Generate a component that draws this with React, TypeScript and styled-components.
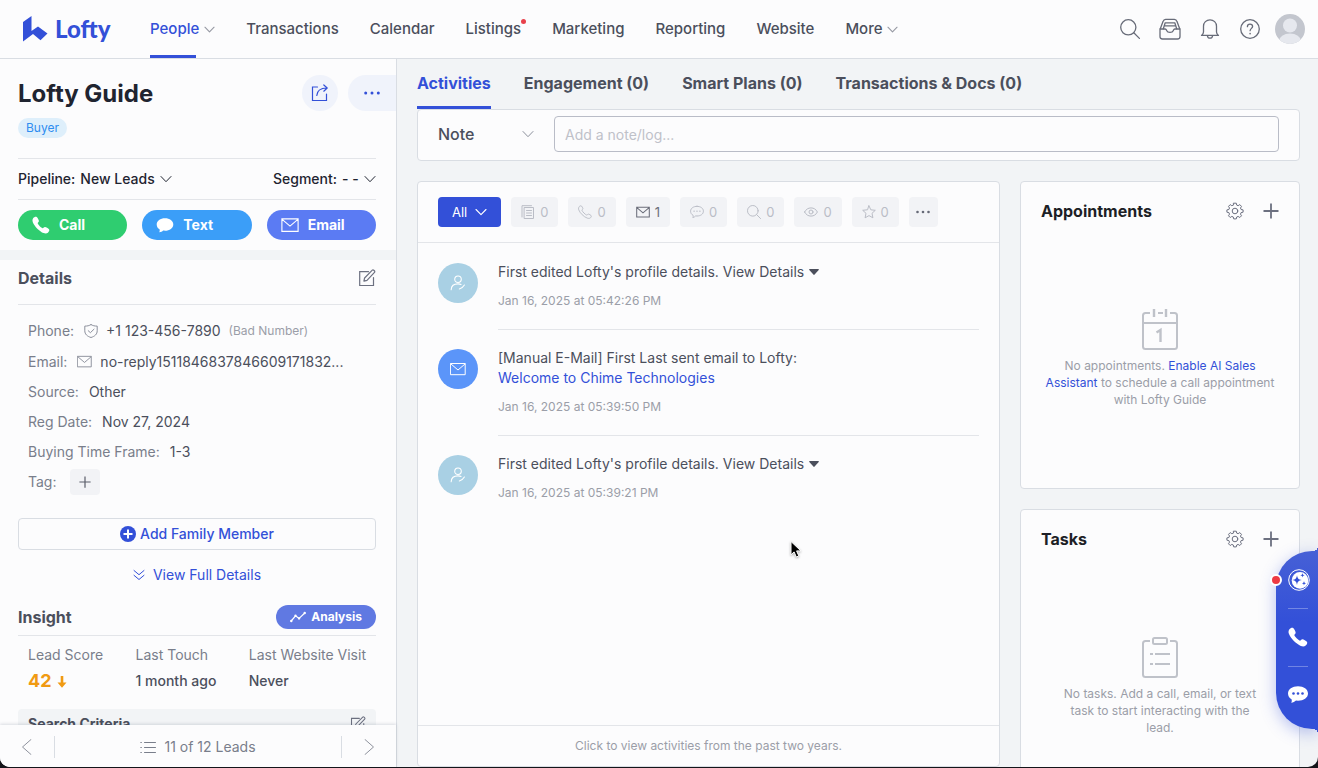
import React from "react";
import styled, { createGlobalStyle, css } from "styled-components";

const color = {
  brand: "#3350d8",
  ink: "#1f2430",
  text: "#4b4f5c",
  muted: "#797e8b",
  faint: "#9b9ea8",
  line: "#e3e5e9",
  frame: "#d9dde3",
  canvas: "#f2f4f6",
  surface: "#fcfcfd",
  chip: "#f2f3f6",
};

const GlobalStyle = createGlobalStyle`
  *, *::before, *::after { box-sizing: border-box; }
  body {
    margin: 0;
    background: #14151a;
    font-family: Inter, "Liberation Sans", sans-serif;
    font-size: 14px;
    line-height: 20px;
    color: ${color.text};
  }
  button, input, select {
    font: inherit;
    color: inherit;
    border: 0;
    margin: 0;
    padding: 0;
    background: none;
  }
  button { cursor: pointer; }
  a { color: inherit; text-decoration: none; }
  h1, h2, p, ul, ol, dl, dd { margin: 0; padding: 0; list-style: none; }
  svg { display: block; flex: none; }
`;

/* ---------- icons ---------- */

type IconProps = { size?: number; children: React.ReactNode; box?: number; weight?: number };

const Icon = ({ size = 16, box = 16, weight = 1, children }: IconProps) => (
  <svg
    width={size}
    height={size}
    viewBox={`0 0 ${box} ${box}`}
    fill="none"
    stroke="currentColor"
    strokeWidth={weight}
    strokeLinecap="round"
    strokeLinejoin="round"
    aria-hidden="true"
  >
    {children}
  </svg>
);

const ChevronDown = ({ size = 12, weight = 1.2 }: { size?: number; weight?: number }) => (
  <Icon size={size} box={12} weight={weight}>
    <path d="M1 3.5 6 8.7 11 3.5" />
  </Icon>
);

const MailIcon = ({ size = 16, weight = 1 }: { size?: number; weight?: number }) => (
  <Icon size={size} weight={weight}>
    <path d="M.8 2.5h14.4v11.2H.8zM1 3l7 6 7-6" strokeLinejoin="miter" />
  </Icon>
);

const SearchIcon = ({ size = 20, weight = 1.3 }: { size?: number; weight?: number }) => (
  <Icon size={size} box={20} weight={weight}>
    <circle cx="8.3" cy="8.3" r="7.6" />
    <path d="m13.8 13.8 5.6 5.6" />
  </Icon>
);

const InboxIcon = () => (
  <Icon size={22} box={22} weight={1.3}>
    <path d="M1 11h5.200c.9 0 1 .5 1.400 1.400.5 1.200 1.600 1.900 3.400 1.900s2.900-.7 3.400-1.900c.4-.9.5-1.400 1.400-1.400H21v7.500c0 1.500-.8 2.500-2.500 2.500h-15C1.800 21 1 20 1 18.500z" />
    <path d="M1.300 10.700 4 3.600C4.500 2 5.200 1.400 6.600 1.400h8.800c1.400 0 2.100.6 2.600 2.200l2.700 7.100" />
    <path d="M4.300 10.800 6.200 4.800h9.600l1.900 6M5.500 7.800h11" />
  </Icon>
);

const BellIcon = () => (
  <Icon size={20} box={20} weight={1.3}>
    <path d="M1.500 16.400c1.300-1 2-1.900 2-3.400V7.200C3.500 3.500 6.300.8 10 .8s6.500 2.700 6.500 6.400V13c0 1.500.7 2.400 2 3.400z" />
    <path d="M7.400 16.800c.3 1.500 1.300 2.400 2.600 2.400s2.300-.9 2.600-2.400" />
  </Icon>
);

const HelpIcon = () => (
  <Icon size={20} box={20} weight={1.3}>
    <circle cx="10" cy="10" r="9.300" />
    <path d="M7.400 7.700C7.400 6.100 8.500 5.200 10 5.200s2.600.9 2.600 2.300c0 1.800-2.500 2-2.500 4.200" />
    <path d="M10.100 14.500v.3" strokeWidth="1.600" />
  </Icon>
);

const AvatarIcon = () => (
  <svg width="30" height="30" viewBox="0 0 30 30" aria-hidden="true">
    <defs>
      <clipPath id="avatar-round">
        <circle cx="15" cy="15" r="15" />
      </clipPath>
    </defs>
    <g clipPath="url(#avatar-round)">
      <rect width="30" height="30" fill="#c3c6ce" />
      <circle cx="15" cy="11.500" r="7" fill="#e6e8ee" />
      <ellipse cx="15" cy="27" rx="11" ry="7.500" fill="#e6e8ee" />
    </g>
  </svg>
);

const ShareIcon = () => (
  <Icon size={18} box={18} weight={1.2}>
    <path d="M6.500 3H1.500v13.500h14V10" strokeLinejoin="miter" />
    <path d="M5.800 11.500c.2-4.500 3.200-7.300 10-7.500M12.800 1l3.400 3-3.400 3.200" />
  </Icon>
);

const EditIcon = ({ size = 18 }: { size?: number }) => (
  <Icon size={size} box={18} weight={1.2}>
    <path d="M10.500 2.700H1.700v13.800h13.800V8.500" strokeLinejoin="miter" />
    <path d="m5.900 12.200.7-3.200 7.700-7.800c.9-.9 3.200 1.100 2.200 2.200L9 11.300z" />
  </Icon>
);

const Handset = ({ size = 18, solid = true, weight = 1 }: { size?: number; solid?: boolean; weight?: number }) => (
  <svg
    width={size}
    height={size}
    viewBox="0 0 18 18"
    fill={solid ? "currentColor" : "none"}
    stroke={solid ? "none" : "currentColor"}
    strokeWidth={weight}
    strokeLinejoin="round"
    aria-hidden="true"
  >
    <path
      d={
        solid
          ? "M1.300 2.100C2.100 1 3.800.200 4.700 1c1 .8 2.100 3 2.200 4.100.1 1-1.300 1.500-1.200 2.200.2 1.300 3.700 4.800 5 5 .7.100 1.300-1.300 2.300-1.200 1.100.100 3.200 1.300 4 2.200.8.900 0 2.500-1.100 3.400-1 .9-2.600 1.100-4.300.4C7.500 15.400 2.500 10.400.9 6.400.200 4.700.400 3.200 1.300 2.100z"
          : "M1.600 2.100C2.300 1.300 3.600.700 4.300 1.200c.8.600 1.900 2.500 2 3.400.1.800-1.200 1.500-1.200 2.200 0 1.300 4.800 6.100 6.100 6.100.7 0 1.400-1.200 2.200-1.200 1 .1 2.900 1.300 3.500 2 .5.700 0 1.900-.8 2.700-.9.900-2.500 1.100-4.300.4C7.500 15.300 2.500 10.300 1 6.300.3 4.600.8 3 1.600 2.100z"
      }
    />
  </svg>
);

const BubbleIcon = () => (
  <svg width="18" height="18" viewBox="0 0 18 18" fill="currentColor" aria-hidden="true">
    <path d="M9 2.200c4.700 0 8.300 2.700 8.300 6.200S13.700 14.700 9 14.700c-.6 0-1.200 0-1.800-.1-1 1-2.300 1.600-4 1.700.5-.9.700-1.800.5-2.800C1.900 12.300.7 10.500.7 8.400.7 4.900 4.300 2.200 9 2.200z" />
  </svg>
);

const ShieldIcon = () => (
  <Icon size={14} box={14} weight={1}>
    <path d="M7 .6c1.800 1.200 3.800 1.500 6.200 1.500v4.700c0 3.400-2.400 5.500-6.200 6.700C3.200 12.300.8 10.200.8 6.800V2.100C3.200 2.100 5.200 1.800 7 .6z" />
    <path d="m4.200 6.700 2.200 2 3.600-3.500" />
  </Icon>
);

const PlusIcon = ({ size = 16, weight = 2 }: { size?: number; weight?: number }) => (
  <Icon size={size} weight={weight}>
    <path d="M8 .5v15M.5 8h15" strokeLinecap="butt" />
  </Icon>
);

const PlusDisc = () => (
  <svg width="16" height="16" viewBox="0 0 16 16" aria-hidden="true">
    <circle cx="8" cy="8" r="8" fill="currentColor" />
    <path d="M8 3.500v9M3.500 8h9" stroke="#fff" strokeWidth="2" />
  </svg>
);

const DoubleChevron = () => (
  <Icon size={12} box={12} weight={1}>
    <path d="m1 1.500 5 4.200 5-4.200M1 6.300l5 4.200 5-4.200" />
  </Icon>
);

const TrendIcon = () => (
  <Icon size={16} weight={1.2}>
    <path d="m1.200 12 4.300-5.200 3.600 2.600L14.800 4" />
    <circle cx="1.300" cy="12" r=".6" />
    <circle cx="5.500" cy="6.800" r=".6" />
    <circle cx="9.100" cy="9.400" r=".6" />
    <circle cx="14.700" cy="4" r=".6" />
  </Icon>
);

const DownArrow = () => (
  <svg width="10" height="14" viewBox="0 0 10 14" fill="#f09a13" aria-hidden="true">
    <path d="M3.700 2h2.600v6.500H9.500L5 13.800.5 8.500h3.200z" />
  </svg>
);

const ListIcon = () => (
  <Icon size={16} weight={1}>
    <path d="M4.500 3.500h11M4.500 8.500h11M4.500 13.500h11M.8 3.500h.6M.8 8.500h.6M.8 13.500h.6" />
  </Icon>
);

const ArrowSide = ({ to }: { to: "left" | "right" }) => (
  <Icon size={16} weight={1}>
    <path d={to === "left" ? "M12 .5 3.500 8l8.500 7.500" : "M4 .5 12.500 8 4 15.500"} />
  </Icon>
);

const GearIcon = () => (
  <Icon size={18} box={18} weight={1}>
    <circle cx="9" cy="9" r="2.800" />
    <path d="M7.700 1.200h2.600l.4 1.900 1.400.6 1.700-1.100 1.700 1.800-1 1.600.6 1.500 2 .4v2.300l-2 .4-.6 1.500 1 1.700-1.700 1.700-1.700-1.100-1.400.6-.4 1.900H7.700l-.4-1.900-1.500-.6-1.600 1.100-1.700-1.700 1-1.700-.6-1.500-2-.4V7.900l2-.4.6-1.500-1-1.600 1.700-1.800 1.600 1.100 1.500-.6z" />
  </Icon>
);

const NotesIcon = () => (
  <Icon size={14} box={14}>
    <path d="M3.500 2.500h9v11h-9zM1 12V.7h9.500M5.500 5.500h5M5.500 8h5M5.500 10.500h5" strokeLinejoin="miter" />
  </Icon>
);

const ChatIcon = () => (
  <Icon size={14} box={14}>
    <path d="M7 1.300c3.600 0 6.400 2 6.400 4.900S10.600 11 7 11l-1.300-.1c-.8.900-1.700 1.400-2.900 1.600.4-.7.500-1.500.3-2.200C1.500 9.500.6 8 .6 6.200.6 3.300 3.400 1.300 7 1.300z" />
    <path d="M4 6.200h.2M6.900 6.200h.2M9.800 6.200h.2" strokeWidth="1.300" />
  </Icon>
);

const EyeIcon = () => (
  <Icon size={14} box={14}>
    <path d="M.6 7C2 4.300 4.200 2.900 7 2.900S12 4.300 13.400 7C12 9.700 9.800 11.100 7 11.100S2 9.700.6 7z" />
    <circle cx="7" cy="7" r="2" />
  </Icon>
);

const StarIcon = () => (
  <Icon size={14} box={14}>
    <path d="m7 .8 1.800 4 4.500.5-3.300 3 .9 4.500L7 10.600l-3.900 2.200.9-4.500-3.300-3 4.500-.5z" />
  </Icon>
);

const Dots = ({ size = 16 }: { size?: number }) => (
  <svg width={size} height="4" viewBox="0 0 16 4" fill="currentColor" aria-hidden="true">
    <circle cx="1.700" cy="2" r="1.500" />
    <circle cx="8" cy="2" r="1.500" />
    <circle cx="14.300" cy="2" r="1.500" />
  </svg>
);

const PersonEditIcon = () => (
  <Icon size={16} box={18} weight={1.2}>
    <circle cx="9" cy="4.800" r="3.700" />
    <path d="M1.300 16.500c.2-4 2.700-6.500 7.700-6.500 1.400 0 2.500.2 3.500.6M10.500 15.800c2.500-.8 4.300-2.300 5.700-4.600" />
  </Icon>
);

const CaretDown = () => (
  <svg width="10" height="6" viewBox="0 0 10 6" fill="currentColor" aria-hidden="true">
    <path d="M.8 0h8.400c.7 0 .9.600.5 1L5.600 5.600c-.3.400-.9.400-1.200 0L.3 1C-.1.600.1 0 .8 0z" />
  </svg>
);

const CalendarArt = () => (
  <svg width="36" height="42" viewBox="0 0 36 42" fill="none" stroke="#bfc2c9" strokeWidth="2" aria-hidden="true">
    <path d="M8 4H3.500C2 4 1 5 1 6.500v31C1 39 2 40 3.500 40h29c1.500 0 2.500-1 2.500-2.500v-31C35 5 34 4 32.500 4H28M1 14h34M16 4h5" />
    <path d="M12 0v8M24 0v8" strokeWidth="2.400" />
    <path d="M14.500 23.500 18.500 21v12" strokeWidth="2.400" />
  </svg>
);

const ClipboardArt = () => (
  <svg width="36" height="42" viewBox="0 0 36 42" fill="none" stroke="#bfc2c9" strokeWidth="2" aria-hidden="true">
    <path d="M8 4H3.500C2 4 1 5 1 6.500v31C1 39 2 40 3.500 40h29c1.500 0 2.500-1 2.500-2.500v-31C35 5 34 4 32.500 4H28" />
    <rect x="11" y="1" width="14" height="6" rx="1.500" />
    <path d="M8 17h3M13 17h15M8 27h3M13 27h15" />
  </svg>
);

const AssistantIcon = () => (
  <svg width="22" height="22" viewBox="0 0 22 22" aria-hidden="true">
    <circle cx="11" cy="11" r="10.300" fill="none" stroke="#fff" strokeWidth="1" />
    <circle cx="12" cy="11.400" r="8.300" fill="#fff" />
    <path
      d="M9 6.300c.6 3.300 1.500 4.200 4.800 4.800-3.300.6-4.200 1.500-4.800 4.800-.6-3.300-1.500-4.200-4.800-4.800 3.300-.6 4.200-1.500 4.800-4.800zM14.500 4c.3 1.600.7 2 2.300 2.300-1.600.3-2 .7-2.300 2.300-.3-1.600-.7-2-2.300-2.300 1.600-.3 2-.7 2.300-2.300zM16 12c.3 1.600.7 2 2.300 2.300-1.600.3-2 .7-2.300 2.300-.3-1.600-.7-2-2.300-2.300 1.600-.3 2-.7 2.300-2.300z"
      fill={color.brand}
    />
  </svg>
);

const ChatSolid = () => (
  <svg width="20" height="20" viewBox="1 2 20 20" fill="#fff" aria-hidden="true">
    <path d="M11 3.300c5.700 0 10 3 10 7.200s-4.300 7.200-10 7.200l-2-.1c-1.300 1.200-2.800 2-4.800 2.200.6-1.100.8-2.200.5-3.300C2.400 15.200 1 13 1 10.500c0-4.200 4.300-7.200 10-7.200z" />
    <g fill={color.brand}>
      <circle cx="6.500" cy="10.500" r="1.300" />
      <circle cx="11" cy="10.500" r="1.300" />
      <circle cx="15.500" cy="10.500" r="1.300" />
    </g>
  </svg>
);

const PointerIcon = () => (
  <svg width="16" height="20" viewBox="0 0 16 20" aria-hidden="true">
    <path
      d="M2 1.500v13.300l3.100-2.900 2.200 5.100 2.500-1.100-2.200-5h4.300z"
      fill="#000"
      stroke="#fff"
      strokeWidth="1"
      strokeLinejoin="round"
    />
  </svg>
);

/* ---------- shell ---------- */

const Shell = styled.div`
  position: relative;
  height: calc(100vh - 1px);
  display: flex;
  flex-direction: column;
  overflow: hidden;
  background: ${color.canvas};
  border-radius: 0 0 10px 10px;
`;

const TopBar = styled.header`
  flex: none;
  height: 59px;
  display: flex;
  align-items: center;
  padding: 0 13px 0 22px;
  background: ${color.surface};
  border-bottom: 1px solid ${color.frame};
`;

const Brand = styled.a`
  display: flex;
  align-items: center;
  gap: 7px;
  width: 128px;
  color: ${color.brand};
  font-family: Lato, Inter, sans-serif;
  font-size: 24px;
  font-weight: 900;
`;

const NavList = styled.nav`
  display: flex;
  align-self: stretch;
  gap: 31px;
`;

const NavLink = styled.a<{ $active?: boolean }>`
  position: relative;
  display: flex;
  align-items: center;
  gap: 5px;
  font-size: 15px;
  font-weight: 500;
  color: ${(p) => (p.$active ? color.brand : color.text)};

  svg { color: #9699a3; }

  ${(p) =>
    p.$active &&
    css`
      &::after {
        content: "";
        position: absolute;
        left: 0;
        right: 19px;
        bottom: 0;
        height: 3px;
        background: ${color.brand};
      }
    `}
`;

const NewDot = styled.span`
  position: absolute;
  top: 19px;
  right: -5px;
  width: 5px;
  height: 5px;
  border-radius: 50%;
  background: #e8414b;
`;

const Tools = styled.div`
  display: flex;
  align-items: center;
  margin-left: auto;
`;

const ToolButton = styled.button`
  width: 40px;
  height: 40px;
  display: grid;
  place-items: center;
  color: #686c79;

  &:last-child { margin: 0 -5px 0 0; }
`;

const Body = styled.div`
  flex: 1;
  min-height: 0;
  display: flex;
`;

/* ---------- lead panel ---------- */

const LeadPanel = styled.aside`
  flex: none;
  width: 397px;
  display: flex;
  flex-direction: column;
  background: ${color.surface};
  border-right: 1px solid ${color.frame};
`;

const LeadScroll = styled.div`
  flex: 1;
  min-height: 0;
  overflow: hidden;
`;

const LeadHead = styled.div`
  display: flex;
  align-items: center;
  height: 52px;
  padding: 16px 0 0 18px;
`;

const LeadName = styled.h1`
  flex: 1;
  padding-top: 2px;
  font-size: 24px;
  line-height: 36px;
  font-weight: 700;
  color: ${color.ink};
`;

const RoundButton = styled.button<{ $flush?: boolean }>`
  display: grid;
  place-items: center;
  width: ${(p) => (p.$flush ? 48 : 36)}px;
  height: 36px;
  margin-left: ${(p) => (p.$flush ? 10 : 0)}px;
  border-radius: ${(p) => (p.$flush ? "18px 0 0 18px" : "18px")};
  background: #f0f3fb;
  color: ${color.brand};
`;

const Section = styled.section`
  padding: 0 20px 0 18px;
`;

const Badge = styled.span`
  display: inline-block;
  margin-top: 7px;
  padding: 0 8px;
  border-radius: 10px;
  background: #deeffb;
  color: #2f8df0;
  font-size: 12px;
`;

const StageRow = styled.div`
  display: flex;
  justify-content: space-between;
  margin-top: 20px;
  height: 42px;
  align-items: center;
  border: solid ${color.line};
  border-width: 1px 0;
  color: ${color.ink};
  font-weight: 500;
`;

const PickLabel = styled.label`
  display: flex;
  gap: 5px;
`;

const PickBox = styled.span`
  position: relative;
  display: flex;
  align-items: center;

  select {
    appearance: none;
    padding-right: 17px;
    outline: none;
  }
  svg {
    position: absolute;
    right: 0;
    pointer-events: none;
  }
`;

const ContactRow = styled.div`
  display: grid;
  grid-template-columns: repeat(3, 1fr);
  gap: 15px;
  padding: 10px 0;
`;

const ContactButton = styled.button<{ $tone: string }>`
  display: flex;
  align-items: center;
  gap: 9px;
  height: 30px;
  padding-left: 14px;
  border-radius: 15px;
  background: ${(p) => p.$tone};
  color: #fff;
  font-weight: 700;
`;

const Band = styled.div`
  height: 10px;
  background: ${color.canvas};
`;

const SectionHead = styled.div<{ $height: number; $lift?: number }>`
  display: flex;
  align-items: center;
  justify-content: space-between;
  height: ${(p) => p.$height}px;
  padding-bottom: ${(p) => p.$lift ?? 0}px;
  border-bottom: 1px solid ${color.line};

  h2 {
    font-size: 16px;
    font-weight: 700;
    color: ${color.text};
  }
`;

const PlainButton = styled.button`
  display: grid;
  place-items: center;
  color: #6c7080;
`;

const Facts = styled.dl`
  padding: 10px 0 0 10px;
`;

const Fact = styled.div<{ $contact?: boolean }>`
  display: flex;
  align-items: center;
  gap: 10px;
  height: ${(p) => (p.$contact ? 31 : 30)}px;

  dt { color: ${color.muted}; }
  dd {
    display: flex;
    align-items: center;
    gap: 8px;
    color: ${color.text};
  }
  small {
    font-size: 12px;
    color: ${color.faint};
  }
  svg { color: #8b8f9b; }
`;

const TagButton = styled.button`
  display: grid;
  place-items: center;
  width: 30px;
  height: 26px;
  margin-left: 3px;
  border-radius: 4px;
  background: ${color.chip};

  svg { color: #5a5e6a; }
`;

const WideButton = styled.button`
  display: flex;
  align-items: center;
  justify-content: center;
  gap: 4px;
  width: 100%;
  height: 32px;
  margin-top: 21px;
  border: 1px solid ${color.frame};
  border-radius: 4px;
  color: ${color.brand};
  font-weight: 500;
`;

const MoreLink = styled.a`
  display: flex;
  align-items: center;
  justify-content: center;
  gap: 8px;
  height: 20px;
  margin: 15px 0 13px;
  color: ${color.brand};
`;

const AnalysisButton = styled.button`
  display: flex;
  align-items: center;
  gap: 5px;
  height: 24px;
  padding: 0 14px;
  border-radius: 12px;
  background: #6079e2;
  color: #fff;
  font-size: 12px;
  font-weight: 700;
`;

const Stats = styled.dl`
  display: flex;
  justify-content: space-between;
  padding: 9px 10px 0;

  dt { color: ${color.muted}; }
  dd {
    display: flex;
    align-items: center;
    gap: 5px;
    height: 32px;
    font-weight: 500;
    color: ${color.text};
  }
`;

const Score = styled.strong`
  font-size: 18px;
  font-weight: 700;
  color: #f09a13;
`;

const Criteria = styled.div`
  display: flex;
  align-items: center;
  justify-content: space-between;
  height: 30px;
  margin-top: 12px;
  padding: 0 10px;
  border-radius: 4px;
  background: ${color.canvas};

  h2 {
    font-size: 14px;
    font-weight: 700;
  }
`;

const Pager = styled.footer`
  flex: none;
  position: relative;
  display: flex;
  align-items: center;
  justify-content: space-between;
  height: 42px;
  padding-top: 2px;
  background: ${color.surface};
  box-shadow: 0 -1px 3px rgba(40, 50, 80, 0.16);
`;

const PagerSide = styled.button`
  display: grid;
  place-items: center;
  width: 55px;
  height: 22px;
  color: #8e929d;

  &:first-child { border-right: 1px solid ${color.frame}; }
  &:last-child { border-left: 1px solid ${color.frame}; }
`;

const PagerText = styled.button`
  display: flex;
  align-items: center;
  gap: 8px;
  color: ${color.muted};
`;

/* ---------- main area ---------- */

const Main = styled.main`
  flex: 1;
  min-width: 0;
  display: flex;
  flex-direction: column;
  padding: 0 18px 0 20px;
`;

const Tabs = styled.nav`
  flex: none;
  display: flex;
  gap: 33px;
  height: 50px;
`;

const Tab = styled.a<{ $active?: boolean }>`
  display: flex;
  align-items: center;
  border-bottom: 3px solid ${(p) => (p.$active ? color.brand : "transparent")};
  color: ${(p) => (p.$active ? color.brand : color.text)};
  font-size: 16px;
  font-weight: 700;
`;

const Card = styled.section`
  background: ${color.surface};
  border: 1px solid ${color.frame};
  border-radius: 4px;
`;

const NoteBar = styled(Card)`
  flex: none;
  display: flex;
  align-items: center;
  gap: 20px;
  height: 52px;
  padding: 0 20px 2px;
`;

const NoteSelect = styled(PickBox)`
  font-size: 16px;
  font-weight: 500;

  select { width: 96px; }
  svg { color: #8b8f9b; }
`;

const NoteInput = styled.input`
  flex: 1;
  min-width: 0;
  height: 36px;
  padding: 0 10px;
  border: 1px solid #b9bcc7;
  border-radius: 4px;
  outline: none;

  &::placeholder { color: #bfc1c9; opacity: 1; }
`;

const Columns = styled.div`
  flex: 1;
  min-height: 0;
  display: flex;
  gap: 20px;
  padding-top: 20px;
`;

const Feed = styled(Card)`
  flex: 1;
  min-width: 0;
  display: flex;
  flex-direction: column;
`;

const FilterBar = styled.div`
  display: flex;
  gap: 10px;
  padding: 15px 20px;
  border-bottom: 1px solid ${color.line};
`;

const Chip = styled.button<{ $kind?: "main" | "live" }>`
  display: flex;
  align-items: center;
  justify-content: center;
  gap: ${(p) => (p.$kind === "main" ? 8 : 5)}px;
  height: 30px;
  padding: 0 ${(p) => (p.$kind === "main" ? 14 : 10)}px;
  border-radius: 4px;
  background: ${(p) => (p.$kind === "main" ? color.brand : color.chip)};
  color: ${(p) => (p.$kind === "main" ? "#fff" : p.$kind === "live" ? "#6b6e7a" : "#babdc6")};
  font-size: 13px;
`;

const DotsChip = styled(Chip)`
  width: 29px;
  padding: 0;
  color: #666a77;
`;

const FeedList = styled.ol`
  flex: 1;
  min-height: 0;
  padding: 1px 20px 0;
`;

const FeedItem = styled.li`
  display: flex;
  gap: 20px;
`;

const FeedBadge = styled.span<{ $tone: string }>`
  flex: none;
  display: grid;
  place-items: center;
  width: 40px;
  height: 40px;
  margin-top: 19px;
  border-radius: 50%;
  background: ${(p) => p.$tone};
  color: #fff;
`;

const FeedText = styled.div`
  flex: 1;
  padding: 18px 0;
  border-bottom: 1px solid ${color.line};

  ${FeedItem}:last-child & { border-bottom: 0; }

  p { display: flex; flex-wrap: wrap; gap: 4px; }
  a { color: ${color.brand}; }
  button { display: inline-flex; align-items: center; gap: 5px; }
  time {
    display: block;
    margin-top: 9px;
    font-size: 12px;
    color: ${color.faint};
  }
`;

const FeedFoot = styled.button`
  height: 41px;
  border-top: 1px solid ${color.line};
  color: ${color.faint};
  font-size: 12px;
`;

const Side = styled.div`
  flex: none;
  width: 280px;
  display: flex;
  flex-direction: column;
  gap: 20px;
`;

const SideCard = styled(Card)`
  flex: none;
  height: 308px;
`;

const SideHead = styled.header`
  display: flex;
  align-items: center;
  gap: 19px;
  height: 58px;
  padding: 0 20px;

  h2 {
    flex: 1;
    font-size: 16px;
    font-weight: 700;
    color: #1d1f26;
  }
`;

const Empty = styled.div<{ $inset: number }>`
  display: flex;
  flex-direction: column;
  align-items: center;
  gap: 6px;
  padding: 69px ${(p) => p.$inset}px 0;
  text-align: center;
  font-size: 12px;
  line-height: 17px;
  color: ${color.faint};

  a { color: ${color.brand}; }
`;

/* ---------- overlays ---------- */

const Dock = styled.div`
  position: absolute;
  right: 0;
  bottom: 38px;
  width: 42px;
  height: 178px;
  display: flex;
  flex-direction: column;
  align-items: center;
  padding: 1px 0 6px 2px;
  border-radius: 36px 0 0 36px;
  background: linear-gradient(#4660d6, ${color.brand} 40%);
  color: #fff;
  box-shadow: 0 4px 16px rgba(51, 80, 216, 0.35);

  &::before, &::after {
    content: "";
    position: absolute;
    right: 0;
    width: 5px;
    height: 5px;
  }
  &::before {
    top: -5px;
    background: radial-gradient(circle at 0 0, transparent 5px, #4660d6 5px);
  }
  &::after {
    bottom: -5px;
    background: radial-gradient(circle at 0 100%, transparent 5px, ${color.brand} 5px);
  }
`;

const DockButton = styled.button`
  flex: 1;
  width: 20px;
  display: grid;
  place-items: center;

  & + & { border-top: 1px solid rgba(255, 255, 255, 0.3); }
`;

const DockDot = styled.span`
  position: absolute;
  top: 23px;
  left: -6px;
  width: 12px;
  height: 12px;
  border: 2px solid #fff;
  border-radius: 50%;
  background: #ee3a43;
`;

const Pointer = styled.div`
  position: absolute;
  left: 789px;
  top: 540px;
  pointer-events: none;
  filter: drop-shadow(0 1px 1px rgba(0, 0, 0, 0.3));
`;

/* ---------- data ---------- */

const navItems = [
  { label: "People", active: true, menu: true },
  { label: "Transactions" },
  { label: "Calendar" },
  { label: "Listings", fresh: true },
  { label: "Marketing" },
  { label: "Reporting" },
  { label: "Website" },
  { label: "More", menu: true },
];

const tabs = ["Activities", "Engagement (0)", "Smart Plans (0)", "Transactions & Docs (0)"];

const filters = [
  { name: "Notes", count: 0, icon: <NotesIcon /> },
  { name: "Calls", count: 0, icon: <Handset size={14} solid={false} weight={1.2} /> },
  { name: "Emails", count: 1, icon: <MailIcon size={14} weight={1.2} /> },
  { name: "Texts", count: 0, icon: <ChatIcon /> },
  { name: "Searches", count: 0, icon: <SearchIcon size={14} weight={1.4} /> },
  { name: "Views", count: 0, icon: <EyeIcon /> },
  { name: "Favorites", count: 0, icon: <StarIcon /> },
];

const ProfileEdit = ({ time }: { time: string }) => (
  <FeedItem>
    <FeedBadge $tone="#a9d0e4">
      <PersonEditIcon />
    </FeedBadge>
    <FeedText>
      <p>
        First edited Lofty's profile details.
        <button type="button">
          View Details <CaretDown />
        </button>
      </p>
      <time>{time}</time>
    </FeedText>
  </FeedItem>
);

const PanelHead = ({ title }: { title: string }) => (
  <SideHead>
    <h2>{title}</h2>
    <PlainButton type="button" aria-label={`${title} settings`}>
      <GearIcon />
    </PlainButton>
    <PlainButton type="button" aria-label={`Add to ${title}`}>
      <PlusIcon weight={1.8} />
    </PlainButton>
  </SideHead>
);

export default function App() {
  return (
    <>
      <GlobalStyle />
      <Shell>
        <TopBar>
          <Brand href="#">
            <svg width="26" height="26" viewBox="0 0 26 26" fill="currentColor" aria-hidden="true">
              <path d="M1 6 9.500 0v15L16 10.500l9.500 7-7 6.800L11 18 1 25.500z" />
            </svg>
            Lofty
          </Brand>
          <NavList aria-label="Main">
            {navItems.map((item) => (
              <NavLink key={item.label} href="#" $active={item.active}>
                {item.label}
                {item.menu && <ChevronDown size={11} />}
                {item.fresh && <NewDot />}
              </NavLink>
            ))}
          </NavList>
          <Tools>
            <ToolButton type="button" aria-label="Search"><SearchIcon /></ToolButton>
            <ToolButton type="button" aria-label="Inbox"><InboxIcon /></ToolButton>
            <ToolButton type="button" aria-label="Notifications"><BellIcon /></ToolButton>
            <ToolButton type="button" aria-label="Help"><HelpIcon /></ToolButton>
            <ToolButton type="button" aria-label="Account"><AvatarIcon /></ToolButton>
          </Tools>
        </TopBar>

        <Body>
          <LeadPanel>
            <LeadScroll>
              <LeadHead>
                <LeadName>Lofty Guide</LeadName>
                <RoundButton type="button" aria-label="Share lead"><ShareIcon /></RoundButton>
                <RoundButton type="button" aria-label="More actions" $flush><Dots /></RoundButton>
              </LeadHead>

              <Section>
                <Badge>Buyer</Badge>
                <StageRow>
                  <PickLabel>
                    Pipeline:
                    <PickBox>
                      <select defaultValue="New Leads"><option>New Leads</option></select>
                      <ChevronDown weight={1} />
                    </PickBox>
                  </PickLabel>
                  <PickLabel>
                    Segment:
                    <PickBox>
                      <select defaultValue="- -"><option>- -</option></select>
                      <ChevronDown weight={1} />
                    </PickBox>
                  </PickLabel>
                </StageRow>
                <ContactRow>
                  <ContactButton type="button" $tone="#2fcd70"><Handset /> Call</ContactButton>
                  <ContactButton type="button" $tone="#3b9ef8"><BubbleIcon /> Text</ContactButton>
                  <ContactButton type="button" $tone="#5b7bf3"><MailIcon size={18} /> Email</ContactButton>
                </ContactRow>
              </Section>

              <Band />

              <Section>
                <SectionHead $height={45} $lift={8}>
                  <h2>Details</h2>
                  <PlainButton type="button" aria-label="Edit details"><EditIcon /></PlainButton>
                </SectionHead>
                <Facts>
                  <Fact $contact>
                    <dt>Phone:</dt>
                    <dd><ShieldIcon /> +1 123-456-7890 <small>(Bad Number)</small></dd>
                  </Fact>
                  <Fact $contact>
                    <dt>Email:</dt>
                    <dd><MailIcon size={15} /> no-reply1511846837846609171832...</dd>
                  </Fact>
                  <Fact><dt>Source:</dt><dd>Other</dd></Fact>
                  <Fact><dt>Reg Date:</dt><dd>Nov 27, 2024</dd></Fact>
                  <Fact><dt>Buying Time Frame:</dt><dd>1-3</dd></Fact>
                  <Fact>
                    <dt>Tag:</dt>
                    <dd><TagButton type="button" aria-label="Add tag"><PlusIcon size={12} weight={1.6} /></TagButton></dd>
                  </Fact>
                </Facts>
                <WideButton type="button"><PlusDisc /> Add Family Member</WideButton>
                <MoreLink href="#"><DoubleChevron /> View Full Details</MoreLink>

                <SectionHead $height={38}>
                  <h2>Insight</h2>
                  <AnalysisButton type="button"><TrendIcon /> Analysis</AnalysisButton>
                </SectionHead>
                <Stats>
                  <div><dt>Lead Score</dt><dd><Score>42</Score> <DownArrow /></dd></div>
                  <div><dt>Last Touch</dt><dd>1 month ago</dd></div>
                  <div><dt>Last Website Visit</dt><dd>Never</dd></div>
                </Stats>
                <Criteria>
                  <h2>Search Criteria</h2>
                  <PlainButton type="button" aria-label="Edit search criteria"><EditIcon size={16} /></PlainButton>
                </Criteria>
              </Section>
            </LeadScroll>

            <Pager>
              <PagerSide type="button" aria-label="Previous lead"><ArrowSide to="left" /></PagerSide>
              <PagerText type="button"><ListIcon /> 11 of 12 Leads</PagerText>
              <PagerSide type="button" aria-label="Next lead"><ArrowSide to="right" /></PagerSide>
            </Pager>
          </LeadPanel>

          <Main>
            <Tabs aria-label="Lead sections">
              {tabs.map((tab, i) => (
                <Tab key={tab} href="#" $active={i === 0}>{tab}</Tab>
              ))}
            </Tabs>
            <NoteBar>
              <NoteSelect>
                <select aria-label="Log type" defaultValue="Note"><option>Note</option></select>
                <ChevronDown weight={1} />
              </NoteSelect>
              <NoteInput aria-label="Note" placeholder="Add a note/log..." />
            </NoteBar>

            <Columns>
              <Feed>
                <FilterBar>
                  <Chip type="button" $kind="main">All <ChevronDown weight={1.1} /></Chip>
                  {filters.map((f) => (
                    <Chip key={f.name} type="button" aria-label={f.name} $kind={f.count ? "live" : undefined}>
                      {f.icon}
                      {f.count}
                    </Chip>
                  ))}
                  <DotsChip type="button" aria-label="More filters"><Dots size={14} /></DotsChip>
                </FilterBar>
                <FeedList>
                  <ProfileEdit time="Jan 16, 2025 at 05:42:26 PM" />
                  <FeedItem>
                    <FeedBadge $tone="#5b95f9"><MailIcon /></FeedBadge>
                    <FeedText>
                      <p>[Manual E-Mail] First Last sent email to Lofty:</p>
                      <a href="#">Welcome to Chime Technologies</a>
                      <time>Jan 16, 2025 at 05:39:50 PM</time>
                    </FeedText>
                  </FeedItem>
                  <ProfileEdit time="Jan 16, 2025 at 05:39:21 PM" />
                </FeedList>
                <FeedFoot type="button">Click to view activities from the past two years.</FeedFoot>
              </Feed>

              <Side>
                <SideCard>
                  <PanelHead title="Appointments" />
                  <Empty $inset={20}>
                    <CalendarArt />
                    <p>
                      No appointments. <a href="#">Enable AI Sales Assistant</a> to schedule a call appointment with
                      Lofty Guide
                    </p>
                  </Empty>
                </SideCard>
                <SideCard>
                  <PanelHead title="Tasks" />
                  <Empty $inset={40}>
                    <ClipboardArt />
                    <p>No tasks. Add a call, email, or text task to start interacting with the lead.</p>
                  </Empty>
                </SideCard>
              </Side>
            </Columns>
          </Main>
        </Body>

        <Dock>
          <DockButton type="button" aria-label="Assistant"><AssistantIcon /></DockButton>
          <DockButton type="button" aria-label="Dialer"><Handset size={20} /></DockButton>
          <DockButton type="button" aria-label="Messages"><ChatSolid /></DockButton>
          <DockDot />
        </Dock>
        <Pointer><PointerIcon /></Pointer>
      </Shell>
    </>
  );
}
